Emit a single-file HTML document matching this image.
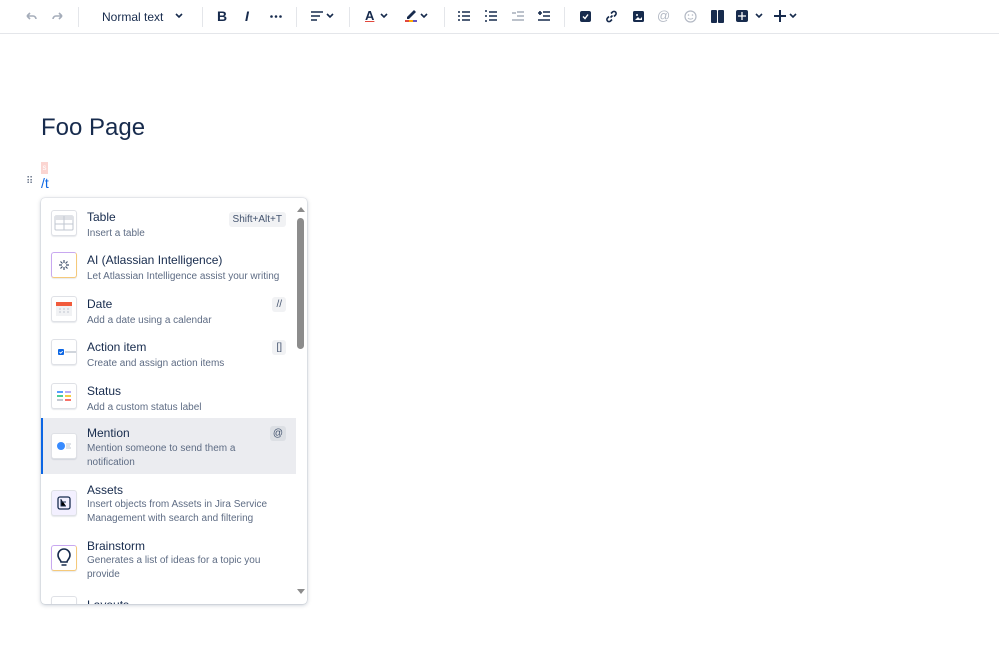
<!DOCTYPE html>
<html><head><meta charset="utf-8"><style>
*{box-sizing:border-box;margin:0;padding:0}
body{width:999px;height:650px;background:#fff;font-family:"Liberation Sans",sans-serif;color:#172b4d;position:relative;overflow:hidden}
.tb{position:absolute;left:0;top:0;width:999px;height:34px;border-bottom:1px solid #e4e6ea}
.a{position:absolute}
.sep{position:absolute;top:7px;width:1px;height:20px;background:#e4e6ea}
.chev{position:absolute;top:13px}
.title{position:absolute;left:41px;top:114px;font-size:24px;color:#172b4d}
.menu{position:absolute;left:41px;top:198px;width:266px;height:406px;background:#fff;border-radius:4px;box-shadow:0 1px 4px rgba(9,30,66,.25),0 0 1px rgba(9,30,66,.3);overflow:hidden}
.it{position:absolute;left:0;width:255px}
.ic{position:absolute;left:10px;width:26px;height:26px;border:1px solid #dfe1e6;border-radius:3px;background:#fff;box-shadow:0 1px 1px rgba(9,30,66,.1)}
.t{position:absolute;left:46px;font-size:12px;color:#172b4d}
.d{position:absolute;left:46px;font-size:10px;color:#5e6c84;line-height:14px;width:200px}
.k{position:absolute;right:10px;background:#f1f2f4;border-radius:3px;font-size:10px;color:#44546f;height:15px;line-height:15px;padding:0 4px}
</style></head><body>
<div class="tb">
<svg class="a" style="left:24px;top:10px" width="14" height="14" viewBox="0 0 14 14"><path d="M3 6h6a3 3 0 0 1 3 3M3 6l3-3M3 6l3 3" stroke="#a5adba" stroke-width="1.6" fill="none"/></svg>
<svg class="a" style="left:51px;top:10px" width="14" height="14" viewBox="0 0 14 14"><path d="M11 6H5a3 3 0 0 0-3 3M11 6L8 3M11 6L8 9" stroke="#a5adba" stroke-width="1.6" fill="none"/></svg>
<div class="sep" style="left:78px"></div>
<div class="a" style="left:102px;top:10px;font-size:12px;color:#172b4d">Normal text</div>
<svg class="chev" style="left:175px" width="8" height="6" viewBox="0 0 8 6"><path d="M1 1l3 3 3-3" stroke="#172b4d" stroke-width="1.6" fill="none"/></svg>
<div class="sep" style="left:202px"></div>
<div class="a" style="left:217px;top:8px;font-size:14px;font-weight:bold;color:#172b4d">B</div>
<div class="a" style="left:245px;top:8px;font-size:14px;font-style:italic;font-weight:bold">I</div>
<svg class="a" style="left:270px;top:15px" width="12" height="3"><circle cx="1.5" cy="1.5" r="1.3" fill="#172b4d"/><circle cx="6" cy="1.5" r="1.3" fill="#172b4d"/><circle cx="10.5" cy="1.5" r="1.3" fill="#172b4d"/></svg>
<div class="sep" style="left:296px"></div>
<svg class="a" style="left:311px;top:11px" width="12" height="10" viewBox="0 0 12 10"><path d="M0 1h12M0 5h9M0 9h6" stroke="#172b4d" stroke-width="1.6"/></svg>
<svg class="chev" style="left:326px" width="8" height="6" viewBox="0 0 8 6"><path d="M1 1l3 3 3-3" stroke="#172b4d" stroke-width="1.6" fill="none"/></svg>
<div class="sep" style="left:349px"></div>
<div class="a" style="left:365px;top:8px;font-size:13px;font-weight:bold;text-decoration:underline;text-decoration-color:#e2483d">A</div>
<svg class="chev" style="left:380px" width="8" height="6" viewBox="0 0 8 6"><path d="M1 1l3 3 3-3" stroke="#172b4d" stroke-width="1.6" fill="none"/></svg>
<svg class="a" style="left:405px;top:8px" width="12" height="14" viewBox="0 0 12 14"><path d="M2 9l7-7 2 2-7 7H2z" fill="#172b4d"/><rect x="0" y="12" width="4" height="2" fill="#e2483d"/><rect x="4" y="12" width="4" height="2" fill="#ffab00"/><rect x="8" y="12" width="4" height="2" fill="#6554c0"/></svg>
<svg class="chev" style="left:420px" width="8" height="6" viewBox="0 0 8 6"><path d="M1 1l3 3 3-3" stroke="#172b4d" stroke-width="1.6" fill="none"/></svg>
<div class="sep" style="left:444px"></div>
<svg class="a" style="left:458px;top:11px" width="12" height="10" viewBox="0 0 12 10"><path d="M0 1h2M4 1h8M0 5h2M4 5h8M0 9h2M4 9h8" stroke="#172b4d" stroke-width="1.6"/></svg>
<svg class="a" style="left:485px;top:10px" width="12" height="12" viewBox="0 0 12 12"><path d="M0 1h2M0 6h2M0 11h2M4 2h8M4 6h8M4 10h8" stroke="#172b4d" stroke-width="1.6"/></svg>
<svg class="a" style="left:512px;top:10px" width="12" height="12" viewBox="0 0 12 12"><path d="M0 3h4M5 2h7M5 6h7M0 10h12" stroke="#a5adba" stroke-width="1.5"/></svg>
<svg class="a" style="left:538px;top:10px" width="12" height="12" viewBox="0 0 12 12"><path d="M0 3h4M5 2h7M5 6h7M0 10h12M2 1v4" stroke="#172b4d" stroke-width="1.6"/></svg>
<div class="sep" style="left:564px"></div>
<svg class="a" style="left:580px;top:11px" width="11" height="11" viewBox="0 0 11 11"><rect width="11" height="11" rx="2" fill="#172b4d"/><path d="M3 5.5l2 2 3-4" stroke="#fff" stroke-width="1.4" fill="none"/></svg>
<svg class="a" style="left:605px;top:10px" width="13" height="13" viewBox="0 0 13 13"><path d="M5.5 7.5l2-2M6 3.5l1.5-1.5a2.1 2.1 0 0 1 3 3L9 6.5M7 9.5L5.5 11a2.1 2.1 0 0 1-3-3L4 6.5" stroke="#172b4d" stroke-width="1.6" fill="none"/></svg>
<svg class="a" style="left:633px;top:11px" width="11" height="11" viewBox="0 0 11 11"><rect width="11" height="11" rx="1.5" fill="#172b4d"/><path d="M2 9l3-3 2 2 2-2v3z" fill="#fff"/><circle cx="4" cy="4" r="1" fill="#fff"/></svg>
<div class="a" style="left:657px;top:8px;font-size:13px;color:#b3b9c4">@</div>
<svg class="a" style="left:684px;top:10px" width="13" height="13" viewBox="0 0 13 13"><circle cx="6.5" cy="6.5" r="5.5" stroke="#b3b9c4" stroke-width="1.2" fill="none"/><circle cx="4.5" cy="5" r=".8" fill="#b3b9c4"/><circle cx="8.5" cy="5" r=".8" fill="#b3b9c4"/><path d="M4 8a3 2.5 0 0 0 5 0" stroke="#b3b9c4" fill="none"/></svg>
<svg class="a" style="left:711px;top:10px" width="13" height="13" viewBox="0 0 13 13"><rect width="6" height="13" rx="1" fill="#172b4d"/><rect x="7" width="6" height="13" rx="1" fill="#172b4d"/></svg>
<svg class="a" style="left:736px;top:10px" width="12" height="12" viewBox="0 0 12 12"><rect width="12" height="12" rx="2" fill="#172b4d"/><path d="M6 2v8M2 6h8" stroke="#fff" stroke-width="1.3"/></svg>
<svg class="chev" style="left:755px" width="8" height="6" viewBox="0 0 8 6"><path d="M1 1l3 3 3-3" stroke="#172b4d" stroke-width="1.6" fill="none"/></svg>
<svg class="a" style="left:774px;top:10px" width="12" height="12" viewBox="0 0 12 12"><path d="M6 0v12M0 6h12" stroke="#172b4d" stroke-width="2"/></svg>
<svg class="chev" style="left:789px" width="8" height="6" viewBox="0 0 8 6"><path d="M1 1l3 3 3-3" stroke="#172b4d" stroke-width="1.6" fill="none"/></svg>
</div>

<div class="title">Foo Page</div>
<div class="a" style="left:41px;top:162px;width:7px;height:12px;background:#fbd5d1;color:#fff;font-size:8px;text-align:center;line-height:12px">s</div>
<div class="a" style="left:26px;top:176px;font-size:10px;color:#6b778c;letter-spacing:-1px">⠿</div>
<div class="a" style="left:41px;top:175px;font-size:14px;color:#0c66e4">/t</div>

<div class="menu">
 <div class="it" style="top:4px;height:44px">
  <div class="ic" style="top:8px"><svg width="24" height="24" viewBox="0 0 24 24"><rect x="3" y="5" width="18" height="14" rx="1" fill="none" stroke="#c1c7d0"/><rect x="3" y="5" width="18" height="4" fill="#dfe1e6"/><path d="M3 13h18M12 5v14" stroke="#c1c7d0"/></svg></div>
  <div class="t" style="top:8px">Table</div><div class="d" style="top:25px">Insert a table</div>
  <div class="k" style="top:10px">Shift+Alt+T</div>
 </div>
 <div class="it" style="top:48px;height:43px">
  <div class="ic" style="top:6px;border:1px solid #c8a8f0;border-bottom-color:#f5c97a;border-right-color:#f5c97a"><svg width="24" height="24" viewBox="0 0 24 24"><path d="M12 7v3M12 14v3M7 12h3M14 12h3M8.5 8.5l2 2M13.5 13.5l2 2M15.5 8.5l-2 2M10.5 13.5l-2 2" stroke="#44546f" stroke-width="1.2"/></svg></div>
  <div class="t" style="top:7px">AI (Atlassian Intelligence)</div><div class="d" style="top:24px;width:210px">Let Atlassian Intelligence assist your writing</div>
 </div>
 <div class="it" style="top:91px;height:43px">
  <div class="ic" style="top:7px"><svg width="24" height="24" viewBox="0 0 24 24"><rect x="4" y="5" width="16" height="4" fill="#f15b3c"/><rect x="4" y="9" width="16" height="10" fill="#f1f2f4"/><path d="M7 12h2M11 12h2M15 12h2M7 15h2M11 15h2M15 15h2" stroke="#c1c7d0"/></svg></div>
  <div class="t" style="top:8px">Date</div><div class="d" style="top:25px">Add a date using a calendar</div>
  <div class="k" style="top:8px">//</div>
 </div>
 <div class="it" style="top:134px;height:44px">
  <div class="ic" style="top:7px"><svg width="24" height="24" viewBox="0 0 24 24"><rect x="6" y="9" width="6" height="6" rx="1" fill="#0c66e4"/><path d="M7.5 12l1.2 1.2 2-2" stroke="#fff" fill="none"/><path d="M13 12h11" stroke="#c1c7d0" stroke-width="1.5"/></svg></div>
  <div class="t" style="top:8px">Action item</div><div class="d" style="top:25px">Create and assign action items</div>
  <div class="k" style="top:8px">[]</div>
 </div>
 <div class="it" style="top:178px;height:42px">
  <div class="ic" style="top:7px"><svg width="24" height="24" viewBox="0 0 24 24"><path d="M5 8h6" stroke="#579dff" stroke-width="2"/><path d="M13 8h6" stroke="#b8acf6" stroke-width="2"/><path d="M5 12h6" stroke="#4bce97" stroke-width="2"/><path d="M13 12h6" stroke="#f5cd47" stroke-width="2"/><path d="M5 16h6" stroke="#c1c7d0" stroke-width="2"/><path d="M13 16h6" stroke="#f87168" stroke-width="2"/></svg></div>
  <div class="t" style="top:8px">Status</div><div class="d" style="top:25px">Add a custom status label</div>
 </div>
 <div class="it" style="top:220px;height:56px;background:#ebecf0;border-left:2px solid #0c66e4">
  <div class="ic" style="top:15px;left:8px"><svg width="24" height="24" viewBox="0 0 24 24"><circle cx="9" cy="12" r="4" fill="#388bff"/><path d="M14 10h5M14 12h4M14 14h5" stroke="#c1c7d0"/></svg></div>
  <div class="t" style="top:8px;left:44px">Mention</div><div class="d" style="top:24px;left:44px;width:170px">Mention someone to send them a notification</div>
  <div class="k" style="top:8px;width:16px;padding:0;text-align:center;background:#dcdfe4">@</div>
 </div>
 <div class="it" style="top:278px;height:56px">
  <div class="ic" style="top:14px;background:#f3f0ff"><svg width="24" height="24" viewBox="0 0 24 24"><rect x="6" y="6" width="12" height="12" rx="2" fill="none" stroke="#172b4d" stroke-width="1.3"/><path d="M9 8v7h5M9 11h5" stroke="#172b4d"/></svg></div>
  <div class="t" style="top:7px">Assets</div><div class="d" style="top:22px;width:190px">Insert objects from Assets in Jira Service Management with search and filtering</div>
 </div>
 <div class="it" style="top:335px;height:57px">
  <div class="ic" style="top:12px;border:1px solid #c8a8f0;border-bottom-color:#f5c97a;border-right-color:#f5c97a"><svg width="24" height="24" viewBox="0 0 24 24"><path d="M9 16c0-2-3-3-3-7a6 6 0 0 1 12 0c0 4-3 5-3 7zM9.5 19h5" stroke="#172b4d" stroke-width="1.6" fill="none"/></svg></div>
  <div class="t" style="top:6px">Brainstorm</div><div class="d" style="top:21px;width:190px">Generates a list of ideas for a topic you provide</div>
 </div>
 <div class="it" style="top:392px;height:20px"><div class="ic" style="top:6px"></div><div class="t" style="top:8px">Layouts</div></div>
 <div class="a" style="left:256px;top:20px;width:7px;height:131px;background:#8c8c8c;border-radius:4px"></div>
 <svg class="a" style="left:256px;top:8px" width="8" height="6"><path d="M0 6l4-5 4 5z" fill="#8c8c8c"/></svg>
 <svg class="a" style="left:256px;top:391px" width="8" height="6"><path d="M0 0l4 5 4-5z" fill="#8c8c8c"/></svg>
</div>
</body></html>
